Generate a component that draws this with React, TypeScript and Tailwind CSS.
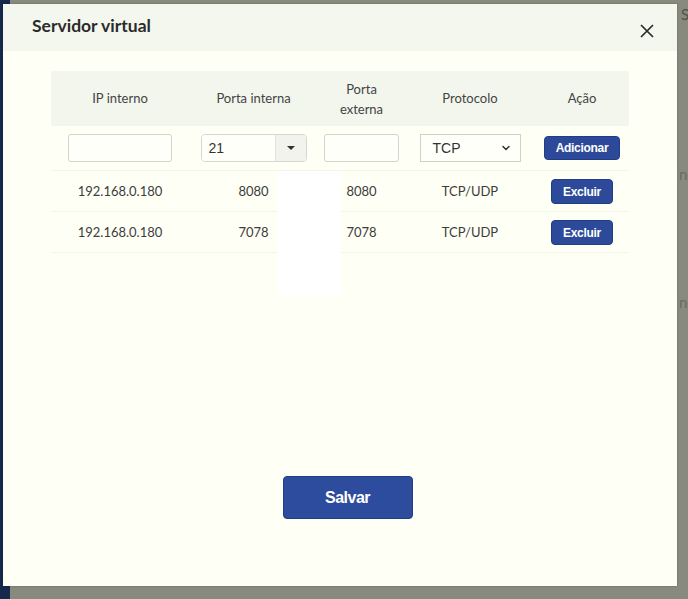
import { ChevronDown } from "lucide-react";

type Rule = {
  ip: string;
  internal: string;
  external: string;
  protocol: string;
};

const rules: Rule[] = [
  { ip: "192.168.0.180", internal: "8080", external: "8080", protocol: "TCP/UDP" },
  { ip: "192.168.0.180", internal: "7078", external: "7078", protocol: "TCP/UDP" },
];

const cols = "grid grid-cols-[138px_129px_87px_130px_94px]";

function ActionButton({ label, className }: { label: string; className: string }) {
  return (
    <button
      className={`rounded-[4px] bg-[#2d4a9a] border border-[#233d85] text-white font-bold text-[12px] tracking-[-0.3px] font-['Liberation_Sans',Arial,sans-serif] ${className}`}
    >
      {label}
    </button>
  );
}

export default function App() {
  return (
    <div className="relative h-[599px] w-[688px] overflow-hidden bg-[#878a7d] font-['Lato',sans-serif]">
      {/* page behind the overlay */}
      <div className="absolute left-0 top-0 h-full w-[10px] bg-[#16294c]" />
      <span className="absolute left-[681px] top-[3px] text-[15px] text-[#50524a]">S</span>
      <span className="absolute left-[679px] top-[163px] text-[15px] text-[#6a6c63]">nc</span>
      <span className="absolute left-[679px] top-[291px] text-[15px] text-[#6a6c63]">nc</span>

      {/* dialog */}
      <div className="absolute left-[3px] top-[4px] flex h-[582px] w-[674px] flex-col bg-[#fefff5] shadow-[0_0_2px_rgba(0,0,0,0.25)]">
        <div className="flex h-[47px] items-center justify-between bg-[#f4f7ee] pb-[3px] pl-[29px] pr-[23px]">
          <h2 className="text-[17.5px] font-bold text-[#2b2b2b]">Servidor virtual</h2>
          <button className="mt-[10px] flex h-[14px] w-[14px] items-center justify-center">
            <svg width="14" height="14" viewBox="0 0 14 14">
              <path d="M1 1L13 13M13 1L1 13" stroke="#2a2a2a" strokeWidth="1.7" />
            </svg>
          </button>
        </div>

        <div className="px-[48px] pt-[20px]">
          <div className="relative text-[13px] text-[#3c3c3c]">
            <div className={`${cols} h-[55px] items-center bg-[#f3f6ec] text-center text-[#444]`}>
              <div>IP interno</div>
              <div>Porta interna</div>
              <div className="leading-[20px]">
                Porta
                <br />
                externa
              </div>
              <div>Protocolo</div>
              <div>Ação</div>
            </div>

            <div className={`${cols} h-[45px] items-center border-b border-[#f3f4ea]`}>
              <div className="flex justify-center">
                <input className="h-[28px] w-[104px] rounded-[3px] border border-[#d3d4cb] bg-[#fffffa]" />
              </div>
              <div className="flex justify-center">
                <div className="flex h-[28px] w-[106px] overflow-hidden rounded-[4px] border border-[#d6d7ce]">
                  <div className="flex flex-1 items-center bg-[#fffffa] pl-[7px] font-['Liberation_Sans',Arial,sans-serif] text-[14px] text-[#333]">
                    21
                  </div>
                  <div className="flex w-[31px] items-center justify-center border-l border-[#e2e3da] bg-[#f2f3ec]">
                    <span className="h-0 w-0 border-x-[4px] border-t-[4px] border-x-transparent border-t-[#333]" />
                  </div>
                </div>
              </div>
              <div className="flex justify-center">
                <input className="h-[28px] w-[75px] rounded-[3px] border border-[#d3d4cb] bg-[#fffffa]" />
              </div>
              <div className="flex justify-center">
                <div className="flex h-[28px] w-[101px] items-center justify-between border border-[#cfd0c6] bg-[#fffffa] pl-[12px] pr-[8px] font-['Liberation_Sans',Arial,sans-serif] text-[14px] text-[#333]">
                  <span>TCP</span>
                  <ChevronDown size={12} strokeWidth={3} color="#333" />
                </div>
              </div>
              <div className="flex justify-center">
                <ActionButton label="Adicionar" className="h-[24px] w-[76px]" />
              </div>
            </div>

            {rules.map((r, i) => (
              <div key={i} className={`${cols} h-[41px] items-center border-b border-[#f3f4ea] pt-[1px] text-center`}>
                <div>{r.ip}</div>
                <div>{r.internal}</div>
                <div>{r.external}</div>
                <div>{r.protocol}</div>
                <div className="flex justify-center">
                  <ActionButton label="Excluir" className="h-[25px] w-[62px]" />
                </div>
              </div>
            ))}

            {/* empty dropdown list of the port picker */}
            <div className="absolute left-[226px] top-[100px] z-10 h-[124px] w-[64px] bg-white" />
          </div>
        </div>

        <div className="mt-[223px] flex justify-center pl-[15px]">
          <button className="h-[43px] w-[130px] rounded-[4px] border border-[#233d85] bg-[#2e4c9d] font-['Liberation_Sans',Arial,sans-serif] text-[16px] font-bold tracking-[-0.5px] text-white">
            Salvar
          </button>
        </div>
      </div>
    </div>
  );
}
